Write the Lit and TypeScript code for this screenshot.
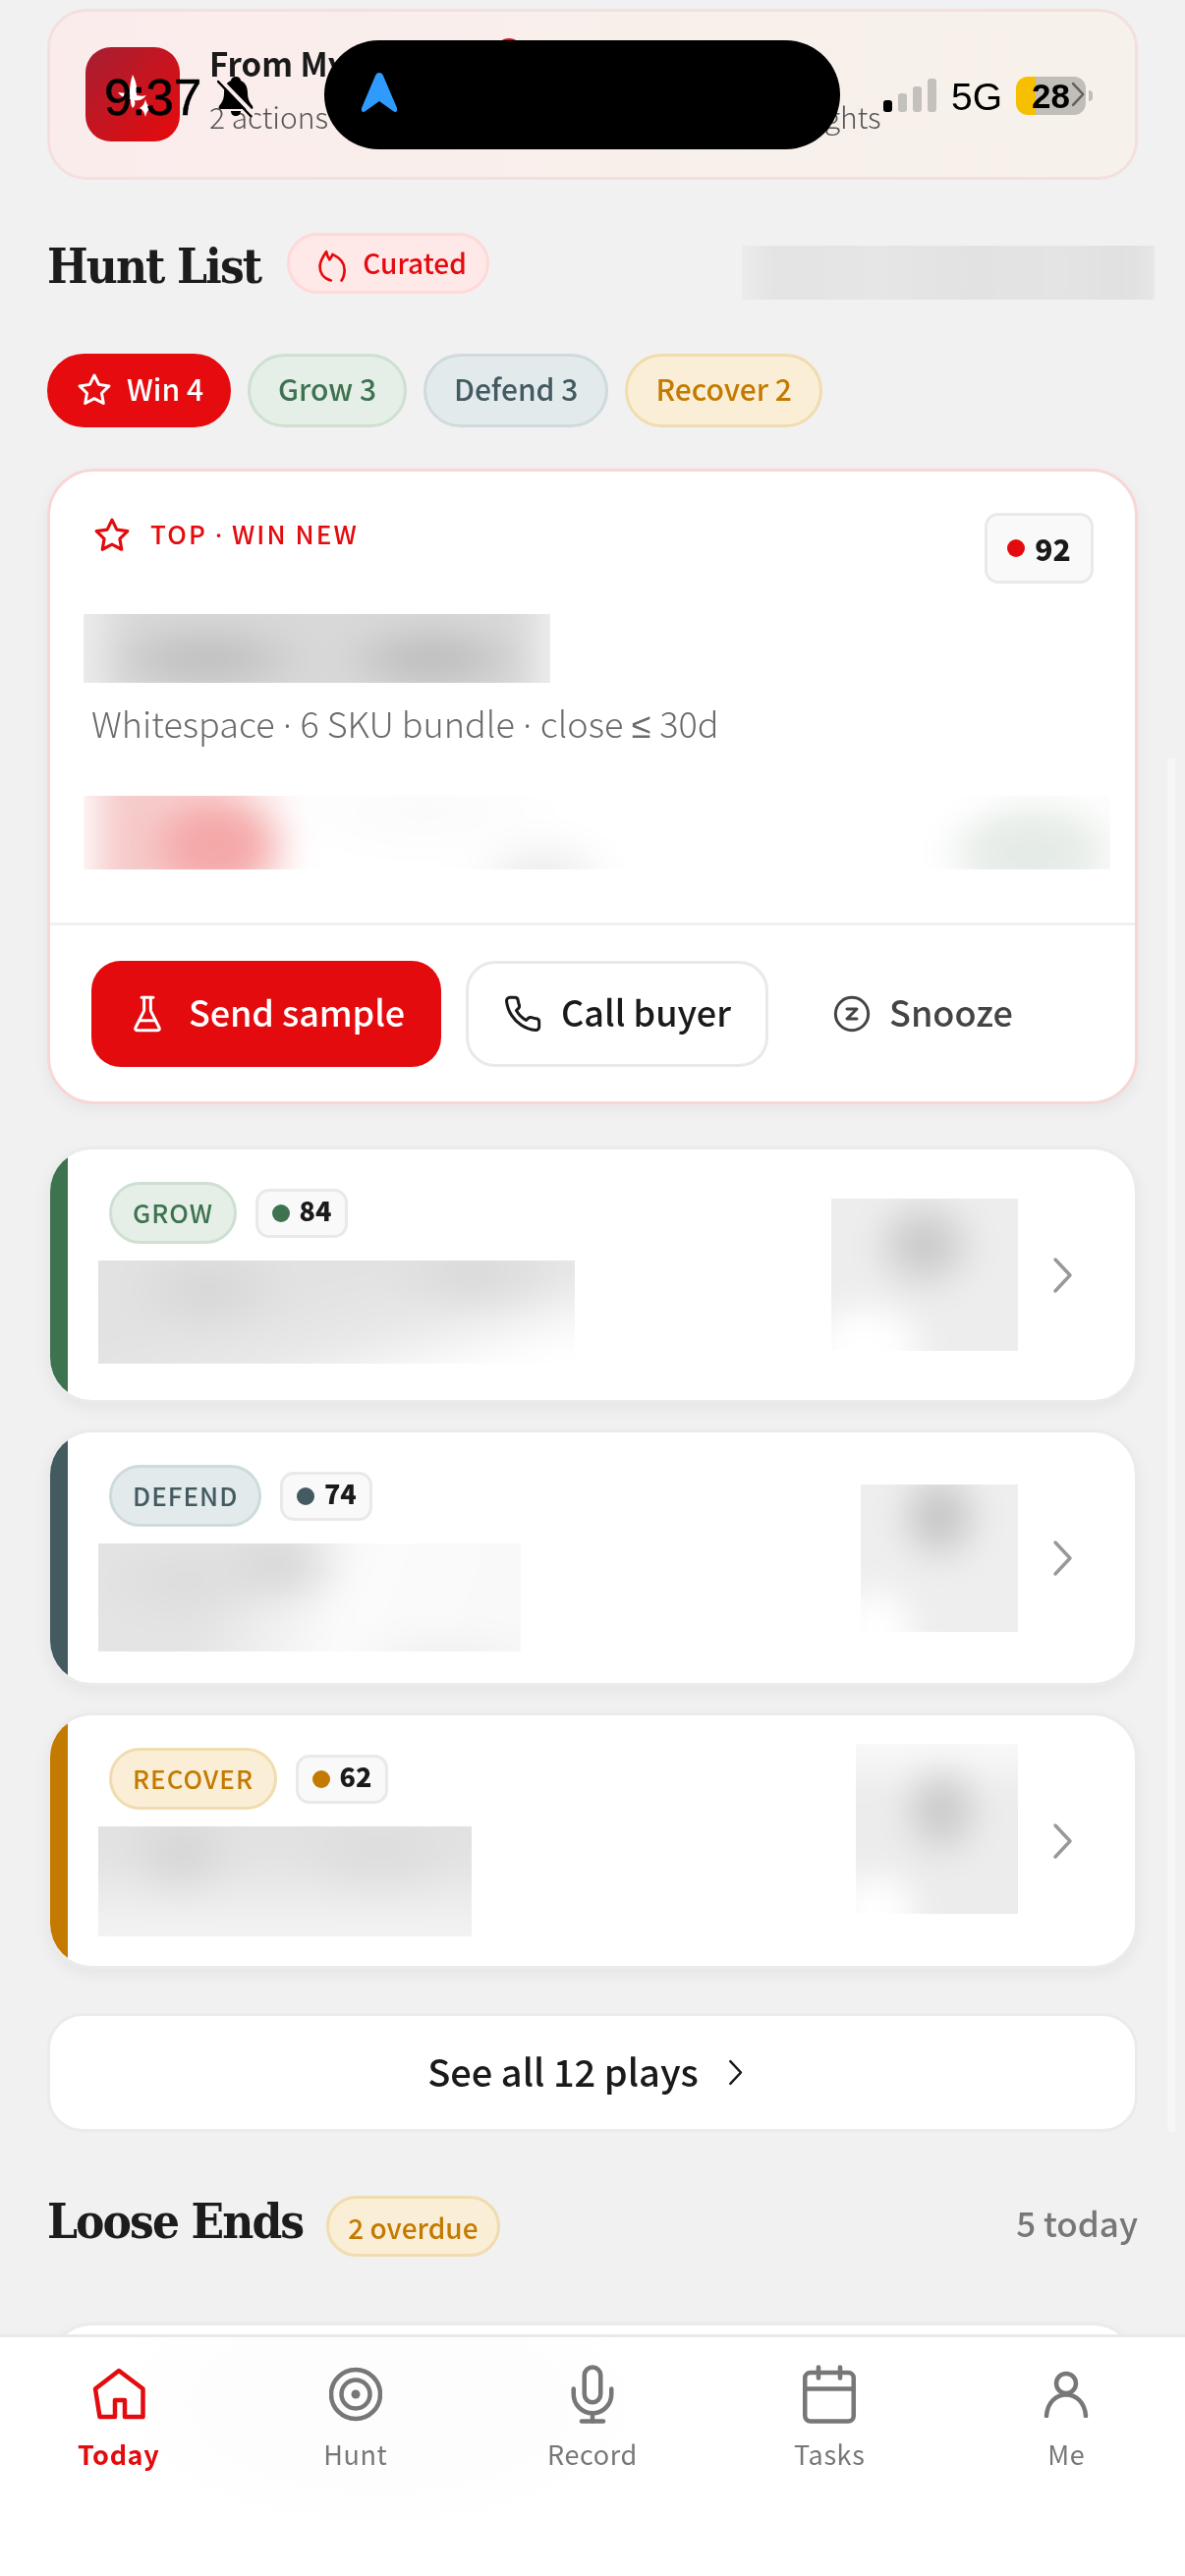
import { LitElement, html, css, svg } from 'lit';
import { customElement } from 'lit/decorators.js';

const star = (size: number) => html`<svg class="ic" width=${size} height=${size} viewBox="0 0 24 24"><path d="M12 2l3.09 6.26L22 9.27l-5 4.87L18.18 21 12 17.77 5.82 21 7 14.14l-5-4.87 6.91-1.01z"/></svg>`;
const chevron = html`<svg class="chev" width="22" height="38" viewBox="0 0 22 38"><path d="M3 3l15 16L3 35"/></svg>`;
// the CJK font draws these two wider than the reference does
const dot = html`<span class="alt">·</span>`;

const rows = [
  { kind: 'grow', label: 'GROW', score: 84, title: 't1', side: 's1' },
  { kind: 'defend', label: 'DEFEND', score: 74, title: 't2', side: 's2' },
  { kind: 'recover', label: 'RECOVER', score: 62, title: 't3', side: 's3' },
];

const tabs = [
  { label: 'Today', on: true, icon: html`<svg width="54" height="54" viewBox="0 0 54 54"><path d="M27 3 L3 21.5 L7.5 50 H23 V33 H33 V50 H51.5 V21.5 Z"/></svg>` },
  { label: 'Hunt', on: false, icon: html`<svg width="54" height="56" viewBox="0 0 54 56"><circle cx="27" cy="28" r="25"/><circle cx="27" cy="28" r="14.5"/><circle class="fill" cx="27" cy="28" r="4.5"/></svg>` },
  { label: 'Record', on: false, icon: html`<svg width="66" height="66" viewBox="0 0 24 24" class="thin">${svg`<path d="M12 2a3 3 0 0 0-3 3v7a3 3 0 0 0 6 0V5a3 3 0 0 0-3-3Z"/><path d="M19 10v2a7 7 0 0 1-14 0v-2"/><path d="M12 19v3"/><path d="M8 22h8"/>`}</svg>` },
  { label: 'Tasks', on: false, icon: html`<svg width="66" height="66" viewBox="0 0 24 24" class="thin">${svg`<rect x="3" y="4" width="18" height="18" rx="2"/><path d="M16 2v4"/><path d="M8 2v4"/><path d="M3 10h18"/>`}</svg>` },
  { label: 'Me', on: false, icon: html`<svg width="46" height="48" viewBox="0 0 46 48"><circle cx="23" cy="13" r="10"/><path d="M3 46C4 32 13 24.500 23 24.500S42 32 43 46"/></svg>` },
];

@customElement('app-root')
export class AppRoot extends LitElement {
  static styles = css`
    :host {
      display: block;
      position: relative;
      height: 2622px;
      overflow: hidden;
      background: #f1f1f1;
      font-family: "Noto Sans CJK SC", "Noto Sans", sans-serif;
      color: #1a1a1a;
    }
    svg { display: block; flex: none; fill: none; stroke: currentColor; stroke-linecap: round; stroke-linejoin: round; }
    .ic { stroke-width: 2; }
    .chev { stroke-width: 3.5; }
    .alt { font-family: "Noto Sans", sans-serif; }

    main { padding: 9px 48px 0; }

    .banner {
      position: relative;
      height: 174px;
      box-sizing: border-box;
      display: flex;
      align-items: center;
      gap: 30px;
      padding: 0 50px 0 36px;
      border: 3px solid #f4dfdf;
      border-radius: 40px;
      background: linear-gradient(90deg, #fbecec, #f6f2ea);
    }
    .app-icon {
      width: 96px;
      height: 96px;
      flex: none;
      border-radius: 26px;
      background: linear-gradient(135deg, #a61f33, #e60a0c);
    }
    .app-icon svg { fill: #fff; stroke: none; }
    .banner-text { flex: 1; min-width: 0; margin-top: -2px; }
    .banner-title { font-size: 33px; font-weight: 700; line-height: 44px; position: relative; top: -9px; }
    .banner-sub { height: 42px; font-size: 30px; line-height: 42px; color: #555; font-weight: 300; white-space: nowrap; margin-top: 2px; }
    .banner .chev { color: #777; width: 15px; height: 26px; }
    .badge { position: absolute; left: 453px; top: 27px; width: 28px; height: 28px; border-radius: 50%; background: #e30b0e; }

    .head { display: flex; align-items: flex-start; height: 62px; margin-top: 54px; }
    h2 {
      margin: 3px 0 0;
      font-family: "DejaVu Serif Condensed", "DejaVu Serif", serif;
      font-stretch: condensed;
      font-weight: 700;
      font-size: 49px;
      letter-spacing: -1.9px;
      line-height: 62px;
      color: #1c1c1c;
    }
    .pill-note {
      display: flex;
      align-items: center;
      box-sizing: border-box;
      height: 62px;
      margin-left: 27px;
      border: 3px solid;
      border-radius: 31px;
      font-size: 28px;
      font-weight: 500;
    }
    .curated { width: 206px; gap: 15px; padding-left: 27px; background: #ffe8e8; border-color: #ffd9d9; color: #e30b0e; }
    .overdue { margin-left: 24px; padding: 0 19px; background: #faefd6; border-color: #f0dcae; color: #c47a00; }
    .curated span { position: relative; top: -1px; }
    .overdue span { position: relative; top: 1px; }
    .flame { stroke-width: 8; position: relative; top: 2px; }

    /* redacted areas: a blurred layer clipped to a crisp box */
    .smudge { position: relative; overflow: hidden; }
    .smudge::before {
      content: "";
      position: absolute;
      inset: -30px;
      background: var(--paint);
      filter: blur(14px);
    }

    .blur-head {
      width: 420px;
      height: 55px;
      margin: 13px -17px 0 auto;
      --paint: linear-gradient(90deg, #f1f1f1 3%, #e3e3e3 12%, #e6e6e6 35%, #e2e2e2 55%, #e4e4e4 75%, #dfdfdf 90%, #f1f1f1 98%);
    }

    .filters { display: flex; gap: 17px; margin-top: 61px; }
    .filter {
      display: flex;
      align-items: center;
      gap: 15px;
      box-sizing: border-box;
      height: 75px;
      padding: 0 28px 5px;
      border: 3px solid;
      border-radius: 38px;
      font-size: 30px;
      font-weight: 500;
    }
    .filter.win { padding: 0 25px 5px 27px; background: #e50b0e; border-color: #e50b0e; color: #fff; }
    .filter.win svg { position: relative; top: 2px; }
    .grow { background: #e5efe7; border-color: #cde0d1; color: #3e7350; }
    .defend { background: #e2eaec; border-color: #cfdadd; color: #425a60; }
    .recover { background: #faefd6; border-color: #f0dcae; color: #c47a00; }

    .card {
      background: #fff;
      border: 3px solid #ebebeb;
      box-shadow: 0 6px 16px rgba(0, 0, 0, 0.05);
    }
    .top { margin-top: 42px; border-color: #f9d6d6; border-radius: 48px; overflow: hidden; }
    .top-body { padding: 42px 25px 54px 34px; border-bottom: 3px solid #f0f0f0; }
    .top-head { display: flex; justify-content: space-between; align-items: flex-start; padding: 0 17px 0 10px; }
    .eyebrow { display: flex; align-items: center; gap: 20px; margin-top: 4px; font-size: 26px; font-weight: 500; letter-spacing: 2.1px; line-height: 36px; color: #e30b0e; }
    .eyebrow span { position: relative; top: -2px; }
    .eyebrow .alt { top: 0; }
    .score {
      display: flex;
      align-items: center;
      justify-content: center;
      gap: 10px;
      box-sizing: border-box;
      border: 3px solid #e9e9e9;
      border-radius: 14px;
      background: #f9f9f9;
      font-weight: 700;
    }
    .top .score { width: 111px; height: 72px; font-size: 30px; }
    .dot { width: 18px; height: 18px; border-radius: 50%; background: currentColor; }
    .top .dot { color: #e30b0e; }
    .blur-title {
      width: 475px;
      height: 70px;
      margin-top: 31px;
      --paint:
        radial-gradient(ellipse 110px 40px at 29% 58%, #c2c2c2 30%, transparent),
        radial-gradient(ellipse 100px 40px at 72% 58%, #c0c0c0 30%, transparent),
        linear-gradient(90deg, #eeeeee 5%, #d8d8d8 14%, #d8d8d8 88%, #f4f4f4 97%);
    }
    .sub { height: 44px; margin: 18px 0 0 8px; font-size: 36px; line-height: 44px; font-weight: 300; color: #6a6a6a; white-space: nowrap; }
    .sub .alt { margin: 0 0.6px; }
    .blur-metrics {
      height: 75px;
      margin-top: 53px;
      --paint:
        radial-gradient(ellipse 80px 60px at 15% 60%, #f5a8a8 45%, transparent),
        radial-gradient(ellipse 80px 50px at 45% 85%, #e9e9e9, transparent),
        radial-gradient(ellipse 150px 50px at 34% 35%, #fafafa, transparent),
        radial-gradient(ellipse 100px 60px at 90% 65%, #e5ebe6 45%, transparent),
        linear-gradient(90deg, #fff 2%, #f6c8c8 6%, #f8d2d2 14%, #fff 23%, #fff 85%, #fcfdfc);
    }
    .actions { display: flex; align-items: center; padding: 36px 42px 35px; gap: 25px; }
    .btn {
      display: flex;
      align-items: center;
      justify-content: center;
      box-sizing: border-box;
      height: 108px;
      gap: 22px;
      border-radius: 30px;
      font-size: 36px;
      font-weight: 500;
    }
    .btn span { position: relative; top: -3px; }
    .btn.send { width: 356px; background: #e30b0e; color: #fff; letter-spacing: -0.1px; }
    .btn.call { width: 308px; border: 3px solid #e9e9e9; color: #1a1a1a; gap: 19px; }
    .btn.snooze { color: #444; margin-left: 40px; gap: 18px; }
    .btn svg { stroke-width: 1.8; }

    .plays { display: flex; flex-direction: column; gap: 27px; margin-top: 43px; }
    .play {
      position: relative;
      display: flex;
      box-sizing: border-box;
      height: 261px;
      border-radius: 46px;
      overflow: hidden;
    }
    .bar { width: 18px; flex: none; }
    .bar.grow { background: #3e7350; }
    .bar.defend { background: #425a60; }
    .bar.recover { background: #c47a00; }
    .play-main { flex: 1; padding: 33px 0 0 31px; }
    .tags { display: flex; align-items: center; gap: 19px; margin-left: 11px; }
    .tag {
      display: flex;
      align-items: center;
      box-sizing: border-box;
      height: 63px;
      padding: 0 21px 3px;
      border-width: 3px;
      border-style: solid;
      border-radius: 32px;
      font-size: 26px;
      font-weight: 500;
      letter-spacing: 1px;
    }
    .play .score { width: 94px; height: 50px; font-size: 27px; }
    .play .score b { position: relative; top: -3px; }
    .grow-dot { color: #3e7350; }
    .defend-dot { color: #425a60; }
    .recover-dot { color: #c47a00; }

    .t1, .t2, .t3 { margin-top: 17px; }
    .t1 { width: 485px; height: 105px; --paint:
      radial-gradient(ellipse 90px 50px at 26% 36%, #d6d6d6, transparent),
      radial-gradient(ellipse 100px 40px at 76% 28%, #d8d8d8, transparent),
      linear-gradient(165deg, #e2e2e2 40%, #e8e8e8 60%, #ffffff 82%); }
    .t2 { width: 430px; height: 110px; --paint:
      radial-gradient(ellipse 70px 50px at 44% 30%, #d4d4d4, transparent),
      radial-gradient(ellipse 100px 50px at 24% 40%, #dcdcdc, transparent),
      radial-gradient(ellipse 110px 30px at 78% 85%, #eeeeee, transparent),
      linear-gradient(110deg, #e4e4e4 32%, #fbfbfb 58%, #f8f8f8); }
    .t3 { width: 380px; height: 112px; --paint:
      radial-gradient(ellipse 60px 50px at 26% 34%, #d4d4d4, transparent),
      radial-gradient(ellipse 90px 50px at 72% 34%, #dcdcdc, transparent),
      linear-gradient(180deg, #e2e2e2 35%, #f3f3f3 80%); }

    .side { flex: none; margin-right: 35px; align-self: center; }
    .s1 { width: 190px; height: 155px; --paint:
      radial-gradient(ellipse 60px 55px at 50% 36%, #c9c9c9 20%, transparent),
      radial-gradient(ellipse 70px 55px at 26% 85%, #fff 50%, transparent),
      #ededed; }
    .s2 { width: 160px; height: 150px; --paint:
      radial-gradient(ellipse 50px 55px at 50% 30%, #c5c5c5 20%, transparent),
      radial-gradient(ellipse 50px 60px at 20% 88%, #fff 50%, transparent),
      #eeeeee; }
    .s3 { width: 165px; height: 173px; margin-bottom: 24px; --paint:
      radial-gradient(ellipse 48px 55px at 52% 42%, #c9c9c9 20%, transparent),
      radial-gradient(ellipse 55px 55px at 22% 88%, #fff 45%, transparent),
      linear-gradient(180deg, #fafafa 12%, #ececec 35%); }
    .play .chev { align-self: center; color: #999; margin-right: 62px; }

    .see-all {
      display: flex;
      align-items: center;
      justify-content: center;
      gap: 30px;
      box-sizing: border-box;
      height: 121px;
      margin-top: 45px;
      padding-right: 14px;
      border-radius: 36px;
      box-shadow: none;
      font-size: 38px;
      font-weight: 500;
    }
    .see-all span { position: relative; top: -2px; }
    .see-all .chev { width: 16px; height: 27px; }

    .loose { margin-top: 65px; }
    .loose h2 { margin-top: -5px; }
    .count { margin: 0 0 0 auto; font-size: 35px; line-height: 54px; font-weight: 500; color: #777; }

    .next { height: 120px; margin: 67px 0 0; border-radius: 46px; }

    .tabbar {
      position: absolute;
      left: 0;
      right: 0;
      top: 2376px;
      bottom: 0;
      display: grid;
      grid-template-columns: repeat(5, 1fr);
      border-top: 3px solid #e9e9e9;
      background: radial-gradient(ellipse 280px 130px at 32% 28%, #fdfdfd 60%, transparent), #fff;
    }
    .tab { display: flex; flex-direction: column; align-items: center; color: #777; font-size: 27px; letter-spacing: 0.6px; line-height: 40px; }
    .tab .slot { display: flex; align-items: center; justify-content: center; height: 66px; margin: 25px 0 8px; }
    .tab svg { stroke-width: 4.5; }
    .tab svg.thin { stroke-width: 1.65; }
    .tab svg .fill { fill: currentColor; stroke: none; }
    .tab.on { color: #e30b0e; font-weight: 700; }

    .scroll { position: absolute; left: 1188px; top: 772px; width: 8px; height: 1398px; background: #f6f6f6; }

    .status { position: absolute; inset: 0 0 auto 0; height: 160px; pointer-events: none; font-family: "Liberation Sans", Arial, sans-serif; color: #000; }
    .time { position: absolute; left: 106px; top: 71px; font-size: 51px; line-height: 58px; -webkit-text-stroke: 0.5px #000; }
    .bell { position: absolute; left: 221px; top: 78px; stroke: none; }
    .island { position: absolute; left: 330px; top: 41px; width: 525px; height: 111px; border-radius: 56px; background: #000; }
    .island svg { position: absolute; left: 37px; top: 32px; stroke: none; fill: #2f9bff; }
    .signal { position: absolute; left: 899px; top: 80px; display: flex; align-items: flex-end; gap: 6px; height: 34px; }
    .signal i { width: 9px; border-radius: 3px; background: #c4c0bb; }
    .signal i:nth-child(1) { height: 12px; background: #000; }
    .signal i:nth-child(2) { height: 19px; }
    .signal i:nth-child(3) { height: 26px; }
    .signal i:nth-child(4) { height: 34px; }
    .net { position: absolute; left: 968px; top: 76px; font-size: 39px; line-height: 46px; }
    .battery {
      position: absolute;
      left: 1034px;
      top: 78px;
      width: 71px;
      height: 39px;
      display: flex;
      align-items: center;
      justify-content: center;
      border-radius: 12px;
      background: linear-gradient(90deg, #ffca00 20px, #c8c8c8 20px);
      mix-blend-mode: multiply;
      font-size: 35px;
      font-weight: 600;
    }
    .nub { position: absolute; left: 1108px; top: 92px; width: 4px; height: 11px; border-radius: 0 4px 4px 0; background: #c1bdb8; }
  `;

  render() {
    return html`
      <main>
        <section class="banner">
          <div class="app-icon">
            <svg width="96" height="96" viewBox="0 0 96 96">
              <path d="M48 28C52 36 53 43 52 49C56 50 59 50 62 49C58 54 53 55 50 54C51 58 50 60 48 62C46 59 46 56 46 53C42 53 37 51 33 46C38 47 42 47 45 46C45 40 46 34 48 28Z"/>
              <path d="M61 53C62 58 64 60 67 62C64 63 62 66 61 71C60 66 58 63 55 62C58 60 60 58 61 53Z"/>
            </svg>
          </div>
          <div class="banner-text">
            <div class="banner-title">From My</div>
            <div class="banner-sub">2 actions queued ${dot} 3 new pipeline and deal insights</div>
          </div>
          ${chevron}
          <div class="badge"></div>
        </section>

        <div class="head">
          <h2>Hunt List</h2>
          <div class="pill-note curated">
            <svg class="flame" width="32" height="34" viewBox="840 115 95 100"><path d="M884 211C860 204 849 186 851 165C853 148 862 136 870 124C872 134 875 142 880 148C884 142 888 136 889 132C910 142 925 158 925 178C925 192 922 202 916 211"/></svg>
            <span>Curated</span>
          </div>
          <div class="smudge blur-head"></div>
        </div>

        <div class="filters">
          <div class="filter win">${star(36)}<span>Win 4</span></div>
          <div class="filter grow">Grow 3</div>
          <div class="filter defend">Defend 3</div>
          <div class="filter recover">Recover 2</div>
        </div>

        <section class="card top">
          <div class="top-body">
            <div class="top-head">
              <div class="eyebrow">${star(38)}<span>TOP ${dot} WIN NEW</span></div>
              <div class="score"><i class="dot"></i><b>92</b></div>
            </div>
            <div class="smudge blur-title"></div>
            <div class="sub">Whitespace ${dot} 6 SKU bundle ${dot} close <span class="alt">≤</span> 30d</div>
            <div class="smudge blur-metrics"></div>
          </div>
          <div class="actions">
            <div class="btn send">
              <svg width="40" height="40" viewBox="0 0 24 24"><path d="M10 2v7.527a2 2 0 0 1-.211.896L4.720 20.550a1 1 0 0 0 .9 1.450h12.760a1 1 0 0 0 .9-1.450l-5.069-10.127A2 2 0 0 1 14 9.527V2"/><path d="M8.500 2h7"/><path d="M7 16h10"/></svg>
              <span>Send sample</span>
            </div>
            <div class="btn call">
              <svg width="40" height="40" viewBox="0 0 24 24"><path d="M22 16.920v3a2 2 0 0 1-2.180 2 19.790 19.790 0 0 1-8.630-3.070 19.500 19.500 0 0 1-6-6 19.790 19.790 0 0 1-3.070-8.670A2 2 0 0 1 4.110 2h3a2 2 0 0 1 2 1.720c.13.960.36 1.900.7 2.810a2 2 0 0 1-.45 2.110L8.090 9.910a16 16 0 0 0 6 6l1.270-1.270a2 2 0 0 1 2.110-.45c.91.340 1.850.57 2.810.7A2 2 0 0 1 22 16.920z"/></svg>
              <span>Call buyer</span>
            </div>
            <div class="btn snooze">
              <svg width="40" height="40" viewBox="0 0 24 24"><circle cx="12" cy="12" r="10"/><path d="M9 9h6l-6 6h6"/></svg>
              <span>Snooze</span>
            </div>
          </div>
        </section>

        <div class="plays">
          ${rows.map(
            (r) => html`
              <article class="card play">
                <div class="bar ${r.kind}"></div>
                <div class="play-main">
                  <div class="tags">
                    <div class="tag ${r.kind}">${r.label}</div>
                    <div class="score"><i class="dot ${r.kind}-dot"></i><b>${r.score}</b></div>
                  </div>
                  <div class="smudge ${r.title}"></div>
                </div>
                <div class="smudge side ${r.side}"></div>
                ${chevron}
              </article>
            `,
          )}
        </div>

        <div class="card see-all"><span>See all 12 plays</span>${chevron}</div>

        <div class="head loose">
          <h2>Loose Ends</h2>
          <div class="pill-note overdue"><span>2 overdue</span></div>
          <div class="count">5 today</div>
        </div>

        <div class="card next"></div>
      </main>

      <div class="scroll"></div>

      <nav class="tabbar">
        ${tabs.map(
          (t) => html`
            <div class="tab ${t.on ? 'on' : ''}">
              <div class="slot">${t.icon}</div>
              <div>${t.label}</div>
            </div>
          `,
        )}
      </nav>

      <div class="status">
        <div class="time">9:37</div>
        <svg class="bell" width="38" height="41" viewBox="0 0 38 41" fill="#000">
          <path fill="#000" d="M19 0C22 0 24 2 24 4C29 6 31 11 31 17C31 23 33 26 36 30C37 32 36 33 34 33H4C2 33 1 32 2 30C5 26 7 23 7 17C7 11 9 6 14 4C14 2 16 0 19 0ZM14 35H24C24 38 22 40 19 40C16 40 14 38 14 35Z"/>
          <path stroke="#f9ecec" stroke-width="4" d="M2 2L37 38"/>
          <path stroke="#000" stroke-width="2.500" d="M1 5L34 40"/>
        </svg>
        <div class="island">
          <svg width="38" height="42" viewBox="0 0 38 42"><path d="M19 1C21 1 22 2 23 4L37 37C38 41 35 42 33 40L19 30L5 40C3 42 0 41 1 37L15 4C16 2 17 1 19 1Z"/></svg>
        </div>
        <div class="signal"><i></i><i></i><i></i><i></i></div>
        <div class="net">5G</div>
        <div class="battery">28</div>
        <div class="nub"></div>
      </div>
    `;
  }
}
